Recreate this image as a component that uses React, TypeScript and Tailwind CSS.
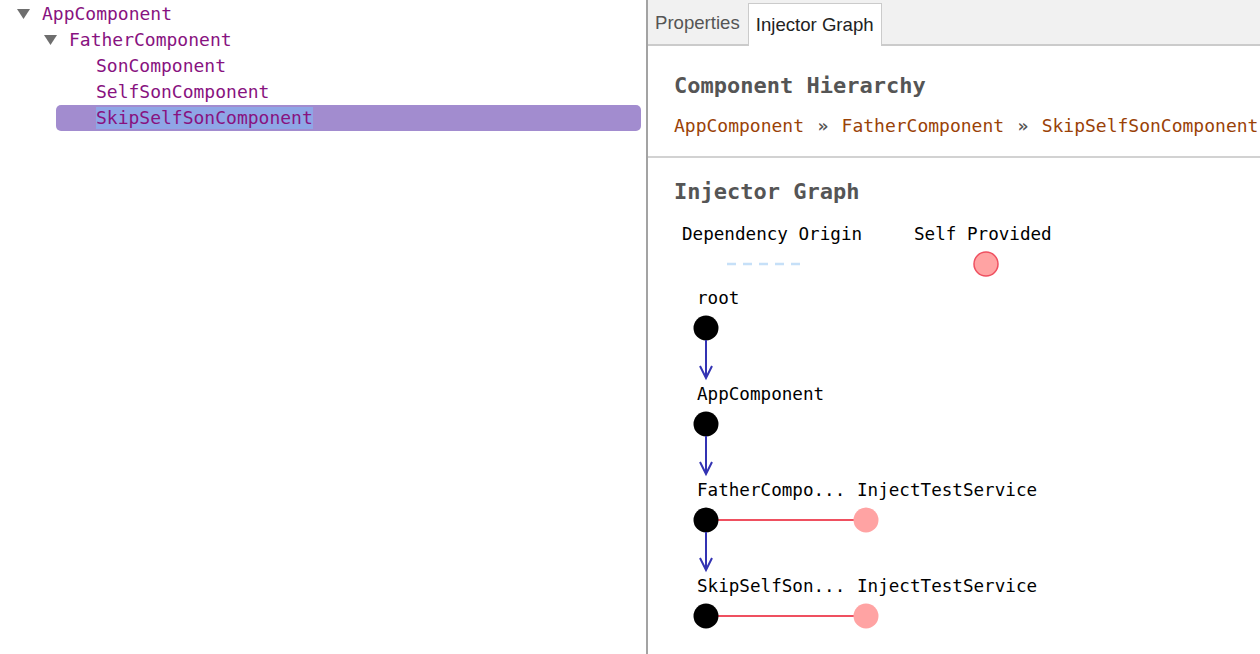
import clsx from "clsx";

type TreeNode = {
  name: string;
  depth: number;
  open?: boolean;
  selected?: boolean;
};

const tree: TreeNode[] = [
  { name: "AppComponent", depth: 0, open: true },
  { name: "FatherComponent", depth: 1, open: true },
  { name: "SonComponent", depth: 2 },
  { name: "SelfSonComponent", depth: 2 },
  { name: "SkipSelfSonComponent", depth: 2, selected: true },
];

const mono = "font-['DejaVu_Sans_Mono','Liberation_Mono',monospace]";

function Caret() {
  return (
    <svg width="13" height="10" viewBox="0 0 13 10" className="shrink-0">
      <polygon points="0,0 13,0 6.5,10" fill="#6e6e6e" />
    </svg>
  );
}

function TreeRow({ node }: { node: TreeNode }) {
  const indent = node.depth === 0 ? 17 : node.depth === 1 ? 44 : 96;
  return (
    <div className="relative flex h-[26px] items-center">
      {node.selected && (
        <div className="absolute inset-y-0 left-[56px] right-[5px] rounded-[5px] bg-[#a28ccf]" />
      )}
      <div className="relative flex items-center" style={{ paddingLeft: indent }}>
        {node.open && (
          <span className="mr-[12px] flex">
            <Caret />
          </span>
        )}
        <span
          className={clsx(
            "text-[18px] leading-[22px] text-[#881280]",
            node.selected && "bg-[#8fa6e6]"
          )}
        >
          {node.name}
        </span>
      </div>
    </div>
  );
}

function Arrow({ x, y1, y2 }: { x: number; y1: number; y2: number }) {
  return (
    <g stroke="#3333b3" strokeWidth="2" fill="none">
      <line x1={x} y1={y1} x2={x} y2={y2} />
      <polyline points={`${x - 6},${y2 - 12} ${x},${y2} ${x + 6},${y2 - 12}`} />
    </g>
  );
}

function InjectorGraph() {
  const textProps = {
    fontFamily: "'DejaVu Sans Mono', 'Liberation Mono', monospace",
    fontSize: 17.6,
    fill: "#000",
  };
  return (
    <svg width="612" height="440" viewBox="0 0 612 440" className="block">
      {/* legend */}
      <text x="34" y="26" {...textProps}>Dependency Origin</text>
      <text x="266" y="26" {...textProps}>Self Provided</text>
      <line x1="79" y1="50" x2="152" y2="50" stroke="#c6e0f8" strokeWidth="2.5" strokeDasharray="9 7" />
      <circle cx="338" cy="50" r="12" fill="#ffa3a3" stroke="#ef5060" strokeWidth="1.5" />

      {/* nodes */}
      <text x="49" y="90" {...textProps}>root</text>
      <circle cx="58" cy="114" r="12.5" fill="#000" />
      <Arrow x={58} y1={126} y2={164} />

      <text x="49" y="186" {...textProps}>AppComponent</text>
      <circle cx="58" cy="210" r="12.5" fill="#000" />
      <Arrow x={58} y1={222} y2={260} />

      <text x="49" y="282" {...textProps}>FatherCompo...</text>
      <text x="209" y="282" {...textProps}>InjectTestService</text>
      <line x1="58" y1="306" x2="218" y2="306" stroke="#ef5060" strokeWidth="2" />
      <circle cx="58" cy="306" r="12.5" fill="#000" />
      <circle cx="218" cy="306" r="12.5" fill="#ffa3a3" />
      <Arrow x={58} y1={318} y2={356} />

      <text x="49" y="378" {...textProps}>SkipSelfSon...</text>
      <text x="209" y="378" {...textProps}>InjectTestService</text>
      <line x1="58" y1="402" x2="218" y2="402" stroke="#ef5060" strokeWidth="2" />
      <circle cx="58" cy="402" r="12.5" fill="#000" />
      <circle cx="218" cy="402" r="12.5" fill="#ffa3a3" />
    </svg>
  );
}

export default function App() {
  return (
    <div className={clsx("flex h-[654px] w-[1260px] overflow-hidden bg-white", mono)}>
      {/* Component tree */}
      <div className="w-[648px] shrink-0 border-r-2 border-[#a3a3a3] pt-px">
        {tree.map((n) => (
          <TreeRow key={n.name} node={n} />
        ))}
      </div>

      {/* Detail panel */}
      <div className="min-w-0 flex-1">
        <div className="flex h-[46px] items-end border-b-2 border-[#cbcbcb] bg-[#f1f1f1] font-['Liberation_Sans',Arial,sans-serif] text-[18.6px]">
          <div className="flex h-[42px] items-center pl-[7px] pr-[8px] text-[#555]">Properties</div>
          <div className="relative z-10 -mb-[2px] flex h-[43px] items-center border border-b-0 border-[#cbcbcb] bg-white px-[7px] text-[#222]">
            Injector Graph
          </div>
        </div>

        <section className="border-b-2 border-[#d2d2d2] px-[26px] pb-[18px] pt-[26px]">
          <h2 className="text-[22px] font-bold leading-[28px] text-[#555]">Component Hierarchy</h2>
          <p className="mt-[14px] whitespace-nowrap text-[18px] leading-[24px] text-[#9a4207]">
            AppComponent <span className="mx-[2.5px] font-bold text-[#555]">»</span> FatherComponent{" "}
            <span className="mx-[2.5px] font-bold text-[#555]">»</span> SkipSelfSonComponent
          </p>
        </section>

        <section className="pt-[20px]">
          <h2 className="px-[26px] text-[22px] font-bold leading-[28px] text-[#555]">Injector Graph</h2>
          <div className="mt-2">
            <InjectorGraph />
          </div>
        </section>
      </div>
    </div>
  );
}
